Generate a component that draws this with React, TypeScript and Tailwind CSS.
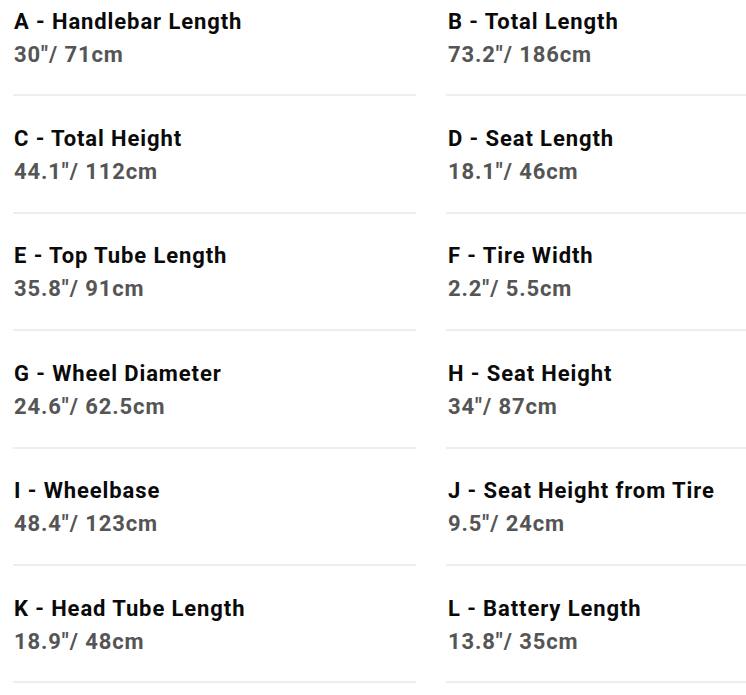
const specs = [
  { label: "A - Handlebar Length", value: "30\"/ 71cm" },
  { label: "B - Total Length", value: "73.2\"/ 186cm" },
  { label: "C - Total Height", value: "44.1\"/ 112cm" },
  { label: "D - Seat Length", value: "18.1\"/ 46cm" },
  { label: "E - Top Tube Length", value: "35.8\"/ 91cm" },
  { label: "F - Tire Width", value: "2.2\"/ 5.5cm" },
  { label: "G - Wheel Diameter", value: "24.6\"/ 62.5cm" },
  { label: "H - Seat Height", value: "34\"/ 87cm" },
  { label: "I - Wheelbase", value: "48.4\"/ 123cm" },
  { label: "J - Seat Height from Tire", value: "9.5\"/ 24cm" },
  { label: "K - Head Tube Length", value: "18.9\"/ 48cm" },
  { label: "L - Battery Length", value: "13.8\"/ 35cm" },
];

export default function App() {
  return (
    <div className="h-[695px] w-[746px] overflow-hidden bg-white font-['Roboto',sans-serif]">
      <div className="-mt-[21px] grid grid-cols-[403px_403px] gap-x-[30px] pl-[13px]">
        {specs.map((s) => (
          <div
            key={s.label}
            className="border-b-2 border-[#eeeeee] pt-[25.6px] pb-[23.8px] pl-px odd:pr-0 even:pl-[2px]"
          >
            <div className="text-[22px] font-bold leading-[33px] tracking-[0.9px] text-[#0a0a0a]">
              {s.label}
            </div>
            <div className="text-[22px] font-bold leading-[33px] tracking-[0.9px] text-[#555555]">
              {s.value}
            </div>
          </div>
        ))}
      </div>
    </div>
  );
}
